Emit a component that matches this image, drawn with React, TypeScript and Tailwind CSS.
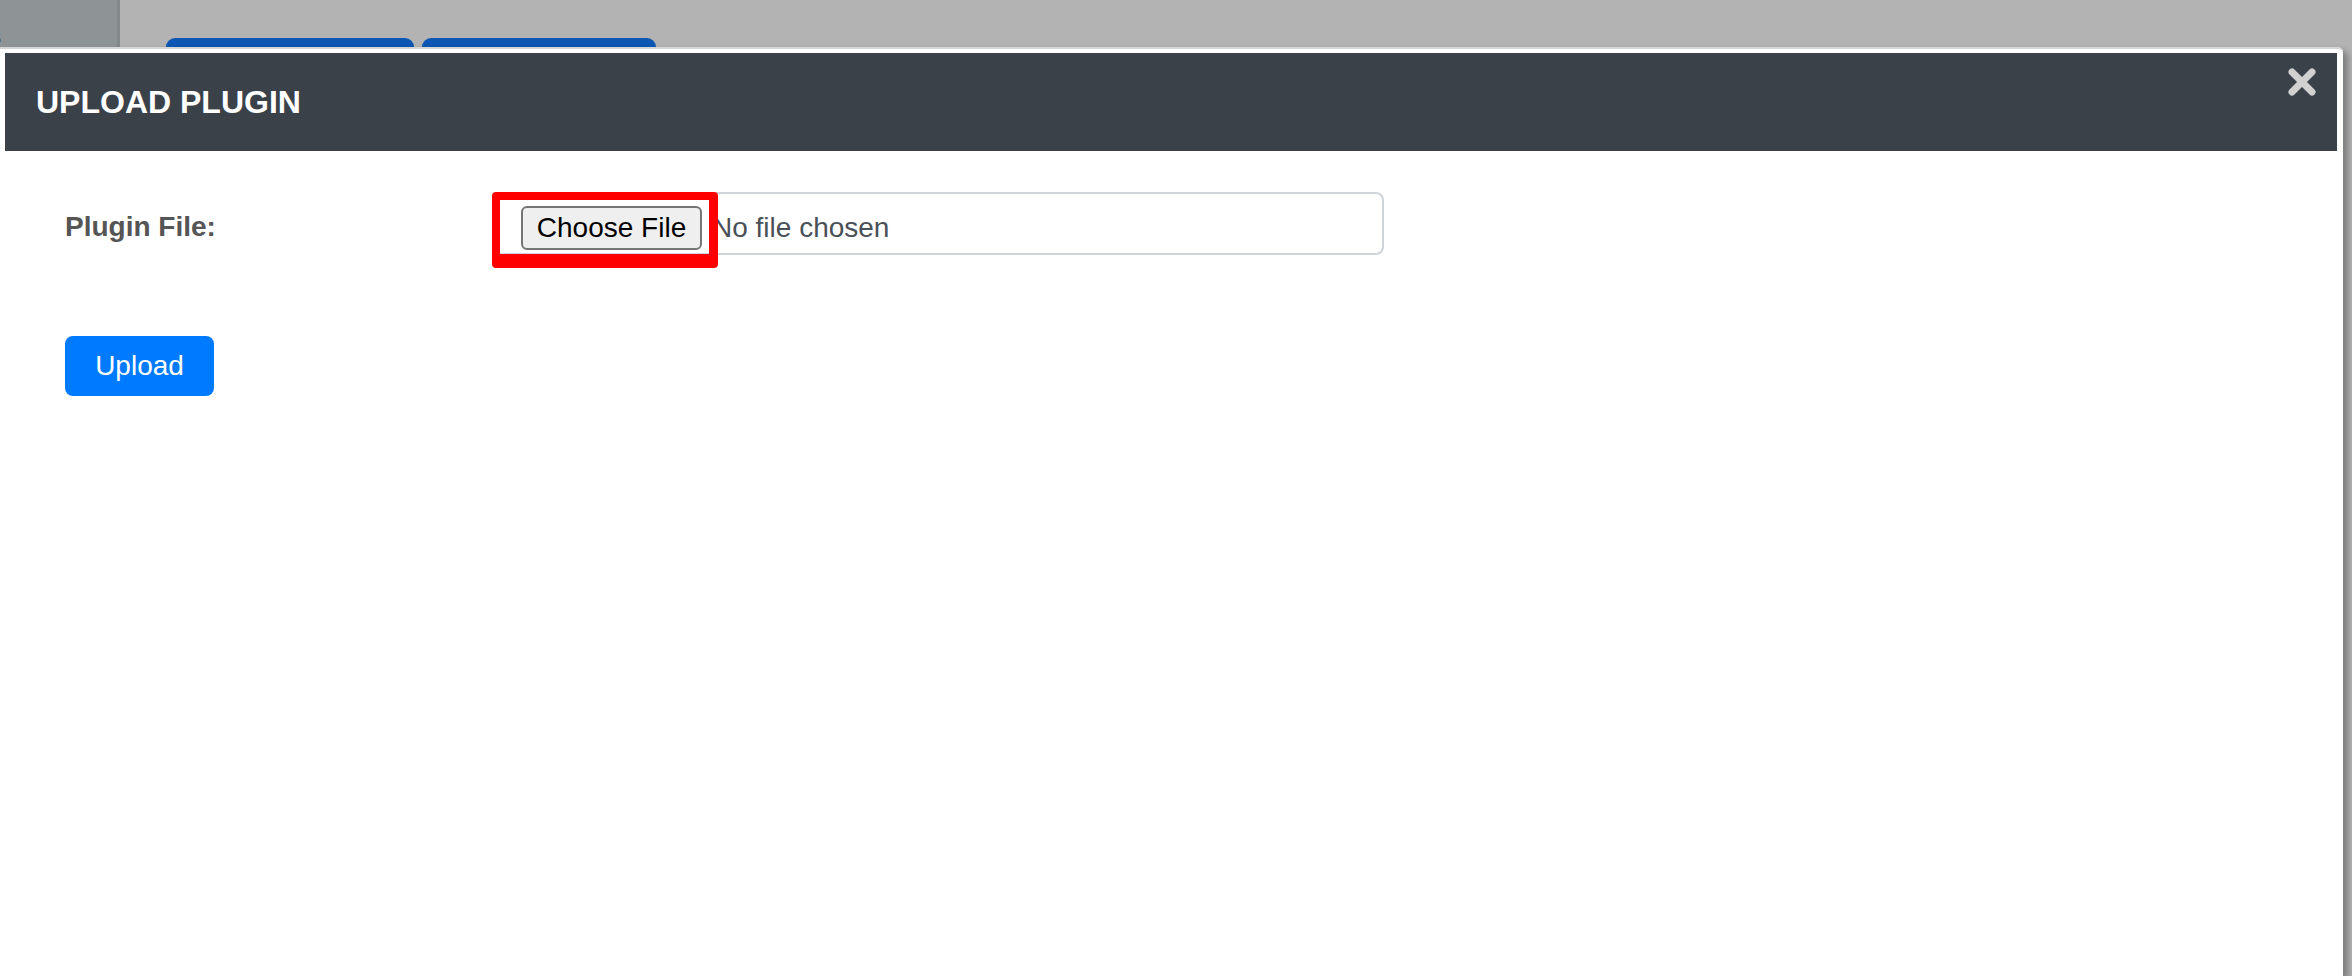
function CloseIcon() {
  return (
    <svg width="28" height="28" viewBox="0 0 28 28">
      <path d="M4 4 L24 24 M24 4 L4 24" stroke="#d1d1d1" strokeWidth="7" strokeLinecap="round" />
    </svg>
  );
}

function Backdrop() {
  return (
    <div className="flex h-full">
      <div className="w-[120px] shrink-0 bg-[#8e9395] border-r-[3px] border-[#83888a] pt-[22px]">
        <span className="block -ml-[14px] text-[28px] font-bold leading-none text-[#3a3f42]">s</span>
      </div>
      <div className="flex-1 bg-[#b3b3b3] pt-[38px] pl-[46px]">
        <div className="flex gap-2">
          <div className="w-[248px] h-[40px] rounded-t-[9px] bg-[#0b57b3]" />
          <div className="w-[234px] h-[40px] rounded-t-[9px] bg-[#0b57b3]" />
        </div>
      </div>
    </div>
  );
}

function UploadModal() {
  return (
    <div className="absolute left-0 top-[47px] bottom-0 w-[2343px] bg-white rounded-tr-[5px] border-t-2 border-[#d6d6d6] shadow-[5px_4px_6px_rgba(0,0,0,0.3)] pt-[4px] pl-[5px] pr-[6px]">
      <div className="h-[98px] bg-[#3a4149] flex items-center pl-[31px]">
        <h2 className="text-[32px] font-bold text-white leading-none">UPLOAD PLUGIN</h2>
      </div>
      <button className="absolute right-[27px] top-[19px]">
        <CloseIcon />
      </button>

      <div className="pl-[60px] pt-[41px]">
        <div className="flex items-center">
          <label className="w-[429px] pt-[6px] text-[28px] font-bold text-[#555555]">Plugin File:</label>
          <div className="relative w-[890px] h-[63px] border-2 border-[#ced4da] rounded-[8px] pl-[25px] pt-[12px]">
            <div className="flex items-center gap-[10px]">
              <div className="w-[181px] h-[44px] bg-[#efefef] border-2 border-[#767676] rounded-[6px] flex items-center justify-center text-[28px] text-black leading-none">
                Choose File
              </div>
              <span className="text-[28px] text-[#495057] leading-none">No file chosen</span>
            </div>
            <div className="absolute -left-[4px] -top-[2px] w-[226px] h-[76px] border-[#ff0000] border-t-[8px] border-l-[8px] border-r-[9px] border-b-[14px] rounded-[4px]" />
          </div>
        </div>

        <button className="mt-[81px] w-[149px] h-[60px] bg-[#007bff] rounded-[8px] text-[28px] text-white leading-none">
          Upload
        </button>
      </div>
    </div>
  );
}

export default function App() {
  return (
    <div className="relative w-[2352px] h-[976px] overflow-hidden bg-[#8c8c8c] font-['Liberation_Sans',Arial,sans-serif]">
      <Backdrop />
      <UploadModal />
    </div>
  );
}
